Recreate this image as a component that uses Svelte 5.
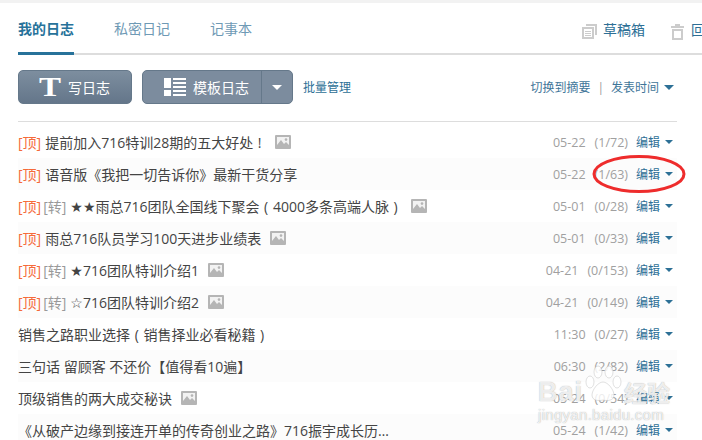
<script>
  const rows = [
    { top: true, title: '提前加入716特训28期的五大好处\u2004!\u2004', pic: true, date: '05-22', count: '(1/72)' },
    { top: true, title: '语音版《我把一切告诉你》最新干货分享', date: '05-22', count: '(1/63)' },
    { top: true, repost: true, title: '★★雨总716团队全国线下聚会\u2004(\u20044000多条高端人脉\u2004)\u2004', pic: true, date: '05-01', count: '(0/28)' },
    { top: true, title: '雨总716队员学习100天进步业绩表', pic: true, date: '05-01', count: '(0/33)' },
    { top: true, repost: true, title: '★716团队特训介绍1', pic: true, date: '04-21', count: '(0/153)' },
    { top: true, repost: true, title: '☆716团队特训介绍2', pic: true, date: '04-21', count: '(0/149)' },
    { title: '销售之路职业选择\u2004(\u2004销售择业必看秘籍\u2004)\u2004', date: '11:30', count: '(0/27)' },
    { title: '三句话 留顾客 不还价【值得看10遍】', date: '06:30', count: '(2/82)' },
    { title: '顶级销售的两大成交秘诀', pic: true, date: '05-24', count: '(0/54)' },
    { title: '《从破产边缘到接连开单的传奇创业之路》716振宇成长历…', date: '05-24', count: '(1/42)' }
  ];
</script>

<div class="page">
  <div class="topstrip"></div>

  <div class="tabs">
    <span class="tab active">我的日志</span>
    <span class="tab">私密日记</span>
    <span class="tab">记事本</span>
    <div class="tab-tools">
      <span class="tool">
        <svg width="15" height="15" viewBox="0 0 15 15" aria-hidden="true"><path d="M4 0h11v11h-2V2H4z" fill="#ccc"></path><path d="M0 3h12v12H0zM2 5v8h8V5z" fill="#ccc"></path><path d="M3 7h6v1H3zM3 9h6v1H3zM3 11h6v1H3z" fill="#ccc"></path></svg>
        草稿箱
      </span>
      <span class="tool trash">
        <svg width="13" height="16" viewBox="0 0 13 16" aria-hidden="true"><path d="M4 0h5v2h4v2H0V2h4z" fill="#ccc"></path><path d="M1 5h11v11H1zM3 7v7h7V7z" fill="#ccc"></path></svg>
        回收站
      </span>
    </div>
  </div>

  <div class="toolbar">
    <button class="btn write">
      <span class="big-t">T</span>
      <span>写日志</span>
    </button>
    <div class="btn template">
      <span class="template-main">
        <svg width="22" height="18" viewBox="0 0 22 18" aria-hidden="true"><path d="M0 0h7v10H0zM0 12h7v6H0zM9 0h13v2H9zM9 4h13v2H9zM9 8h13v2H9zM9 12h13v2H9zM9 16h13v2H9z" fill="#fff"></path></svg>
        <span>模板日志</span>
      </span>
      <span class="template-caret"><i class="caret white"></i></span>
    </div>
    <span class="batch">批量管理</span>
    <div class="view-opts">
      <span>切换到摘要</span>
      <span class="sep">|</span>
      <span>发表时间</span>
      <i class="caret sort"></i>
    </div>
  </div>

  <ul class="list">
    {#each rows as row, i}
      <li class="row" class:striped={i % 2 === 1}>
        <div class="title">
          {#if row.top}<span class="flag">[顶]</span>{/if}
          {#if row.repost}<span class="repost">[转]</span>{/if}
          <span class="name">{row.title}</span>
          {#if row.pic}
            <svg class="pic" width="16" height="14" viewBox="0 0 16 14" aria-hidden="true"><path d="M1 0h14a1 1 0 0 1 1 1v12a1 1 0 0 1-1 1H1a1 1 0 0 1-1-1V1a1 1 0 0 1 1-1z" fill="#b5b5b5"></path><path d="M2 2h12v8l-3-3-2 2-3-4-4 5z" fill="#f2f2f2"></path><circle cx="11" cy="4.6" r="1.3" fill="#b5b5b5"></circle></svg>
          {/if}
        </div>
        <div class="meta">
          <span class="date">{row.date}</span>
          <span class="count">{row.count}</span>
          <span class="edit">编辑</span>
          <i class="caret small"></i>
        </div>
      </li>
    {/each}
  </ul>

  <svg class="circle" width="96" height="44" viewBox="0 0 96 44" aria-hidden="true"><ellipse cx="48" cy="22" rx="45" ry="17.5" fill="none" stroke="#ee2c2c" stroke-width="3"></ellipse></svg>

  <div class="watermark">
    <svg class="paw" width="38" height="38" viewBox="0 0 38 38" aria-hidden="true"><g fill="#fff" fill-opacity="0.8" stroke="#bbb" stroke-opacity="0.45"><ellipse cx="6" cy="17" rx="4" ry="6"></ellipse><ellipse cx="14" cy="7" rx="4" ry="6"></ellipse><ellipse cx="25" cy="7" rx="4" ry="6"></ellipse><ellipse cx="33" cy="17" rx="4" ry="6"></ellipse><path d="M19 17c5 0 11 8 11 13 0 6-7 6-11 5-4 1-11 1-11-5 0-5 6-13 11-13z"></path></g></svg>
    <div class="wm-main"><span>Bai</span><span class="wm-cn">经验</span></div>
    <div class="wm-sub">jingyan.baidu.com</div>
  </div>
</div>

<style>
  :global(body) {
    margin: 0;
    background: #fff;
  }

  .page {
    position: relative;
    width: 702px;
    height: 440px;
    overflow: hidden;
    background: #fff;
    font-family: "Open Sans", "DejaVu Sans", "Noto Sans CJK SC", sans-serif;
    font-size: 14px;
    color: #444;
  }

  .topstrip {
    height: 3px;
    background: #f2f2f2;
  }

  .tabs {
    display: flex;
    align-items: stretch;
    height: 50px;
    margin-left: 18px;
    border-bottom: 2px solid #ddd;
    white-space: nowrap;
  }

  .tab {
    margin-right: 40px;
    margin-bottom: -2px;
    padding-top: 15px;
    line-height: 22px;
    color: #6f9ab5;
    box-sizing: border-box;
  }

  .tab.active {
    color: #27729a;
    font-weight: 700;
    border-bottom: 3px solid #27729a;
  }

  .tab-tools {
    display: flex;
    gap: 26px;
    margin-left: auto;
    margin-right: -31px;
    padding-top: 17px;
  }

  .tool {
    display: flex;
    align-items: flex-start;
    gap: 6px;
    line-height: 20px;
    color: #2d6f96;
  }

  .tool svg {
    margin-top: 4px;
  }

  .trash {
    gap: 7px;
  }

  .toolbar {
    display: flex;
    align-items: center;
    height: 34px;
    margin: 15px 28px 0 18px;
    white-space: nowrap;
  }

  .btn {
    box-sizing: border-box;
    height: 34px;
    border: 1px solid #65788a;
    border-radius: 5px;
    color: #fff;
    font: inherit;
    padding: 0;
  }

  .write {
    display: flex;
    align-items: center;
    gap: 7px;
    width: 114px;
    padding-left: 20px;
    background: linear-gradient(180deg, #7d8e9f 0%, #64768a 100%);
  }

  .big-t {
    display: inline-block;
    width: 22px;
    text-align: center;
    font-family: "Liberation Serif", serif;
    font-size: 28px;
    font-weight: 700;
    line-height: 30px;
    transform: scaleX(1.18);
  }

  .template {
    display: flex;
    width: 151px;
    margin-left: 10px;
    background: #7c8c9e;
  }

  .template-main {
    display: flex;
    align-items: center;
    gap: 7px;
    width: 119px;
    border-right: 1px solid #65788a;
    padding-left: 21px;
    box-sizing: border-box;
  }

  .template-caret {
    flex: 1;
    display: flex;
    align-items: center;
    justify-content: center;
  }

  .caret {
    display: inline-block;
    width: 0;
    height: 0;
    border-style: solid;
    border-color: transparent;
    border-width: 5px 5px 0;
  }

  .caret.white {
    border-top-color: #fff;
  }

  .caret.sort {
    border-top-color: #2d7096;
    margin-left: 5px;
  }

  .caret.small {
    border-width: 4px 4px 0;
    border-top-color: #2d7096;
    margin-left: 5px;
  }

  .batch {
    margin-left: 10px;
    font-size: 12px;
    color: #2d7096;
  }

  .view-opts {
    display: flex;
    align-items: center;
    margin-left: auto;
    font-size: 12px;
    color: #3f7699;
  }

  .sep {
    margin: 0 7px;
    color: #999;
  }

  .list {
    list-style: none;
    margin: 17px 25px 0 18px;
    padding: 0;
    border-top: 1px solid #ddd;
  }

  .row {
    display: flex;
    justify-content: space-between;
    align-items: center;
    height: 32px;
    white-space: nowrap;
  }

  .row:first-child {
    margin-top: 4px;
  }

  .striped {
    background: #fcfcfc;
  }

  .title {
    display: flex;
    align-items: center;
    min-width: 0;
    color: #444;
  }

  .flag {
    color: #f56a3a;
    margin-right: 4px;
  }

  .repost {
    color: #999;
    margin-left: -2px;
    margin-right: 4px;
  }

  .pic {
    margin-left: 9px;
  }

  .meta {
    display: flex;
    align-items: center;
    font-size: 12.5px;
    color: #a0a0a0;
    padding-right: 4px;
  }

  .count {
    margin-left: 9px;
  }

  .edit {
    margin-left: 8px;
    font-size: 12px;
    color: #2d6f96;
  }

  .circle {
    position: absolute;
    left: 591px;
    top: 152px;
  }

  .watermark {
    position: absolute;
    left: 538px;
    top: 378px;
    width: 132px;
    color: rgba(255, 255, 255, 0.82);
    text-shadow: 0 0 1px rgba(120, 120, 120, 0.7);
    pointer-events: none;
  }

  .paw {
    position: absolute;
    left: 46px;
    top: -13px;
  }

  .wm-main {
    position: relative;
    display: flex;
    align-items: center;
    justify-content: space-between;
    height: 28px;
    font-family: "Liberation Sans", "Noto Sans CJK SC", sans-serif;
    font-size: 27px;
    font-weight: 700;
    letter-spacing: 1px;
  }

  .wm-cn {
    font-size: 23px;
    letter-spacing: 0;
  }

  .wm-sub {
    font-family: "Liberation Sans", sans-serif;
    font-size: 15px;
    line-height: 18px;
    letter-spacing: 0.3px;
    white-space: nowrap;
  }
</style>
